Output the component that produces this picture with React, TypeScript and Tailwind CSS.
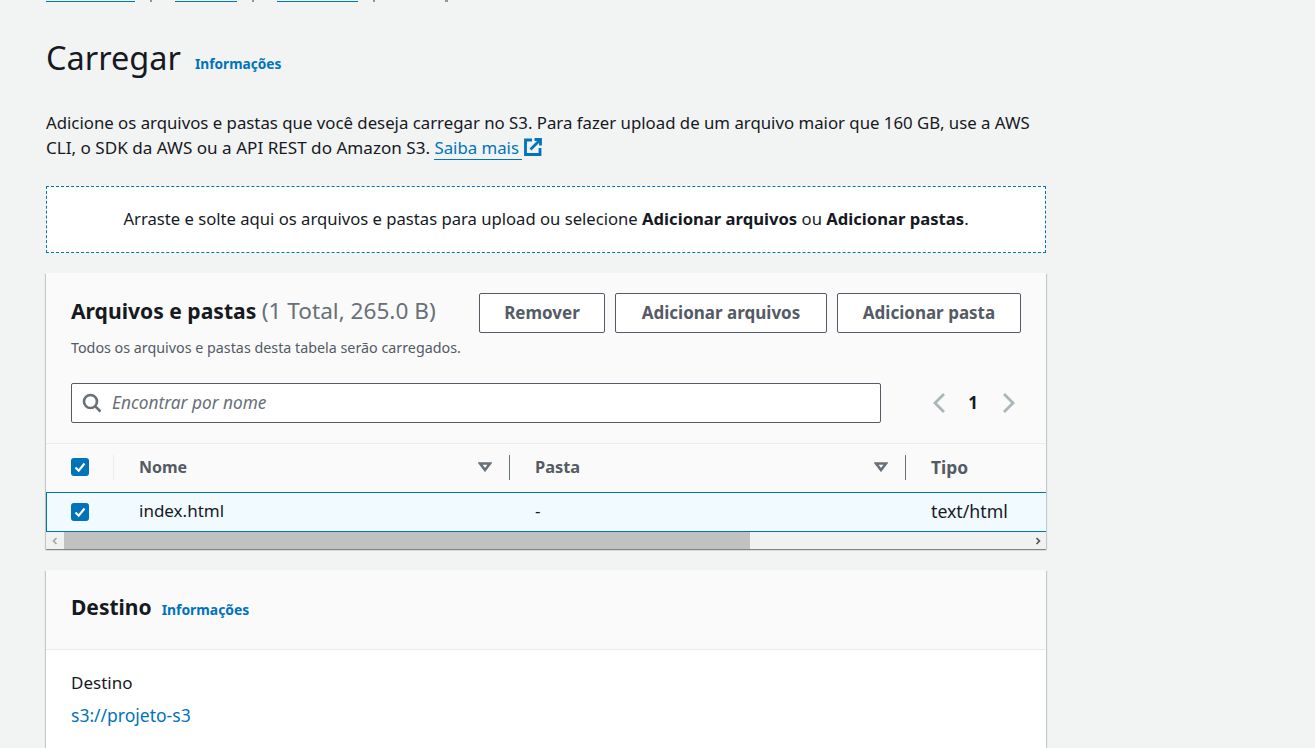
function Check() {
  return (
    <span className="flex h-[18px] w-[18px] items-center justify-center rounded-[3px] bg-[#0073bb]">
      <svg viewBox="0 0 14 14" className="h-[14px] w-[14px]" fill="none" stroke="#fff" strokeWidth="2.2">
        <path d="M2.5 7.5 L5.7 10.7 L11.5 3.5" />
      </svg>
    </span>
  );
}

function Caret() {
  return (
    <svg viewBox="0 0 14 10" className="h-[10px] w-[14px]" fill="none" stroke="#687078" strokeWidth="2.6">
      <path d="M2 1.5 H12 L7 8 Z" />
    </svg>
  );
}

function Btn({ label, w }: { label: string; w: string }) {
  return (
    <button className={`${w} flex h-10 items-center justify-center rounded-[2px] border border-[#545b64] bg-white text-[17px] font-bold text-[#545b64]`}>
      {label}
    </button>
  );
}

export default function App() {
  return (
    <div className="h-[748px] overflow-hidden bg-[#f2f3f3] pl-[46px] font-['Noto_Sans',sans-serif] text-[16.8px] text-[#16191f]">
      {/* breadcrumb is scrolled almost out of view, only its bottom edge shows */}
      <div className="flex h-[2px] w-[1000px] items-start">
        <div className="h-[2px] w-[89px] border-b border-[#0073bb]" />
        <div className="ml-[15px] h-[2px] w-[2px] bg-[#8d949c]" />
        <div className="ml-[23px] h-[2px] w-[62px] border-b border-[#0073bb]" />
        <div className="ml-[15px] h-[2px] w-[2px] bg-[#8d949c]" />
        <div className="ml-[23px] h-[2px] w-[81px] border-b border-[#0073bb]" />
        <div className="ml-[15px] h-[2px] w-[2px] bg-[#8d949c]" />
        <div className="ml-[70px] h-[2px] w-[3px] bg-[#9a9a8c]" />
      </div>

      <div className="flex h-[108px] w-[1000px] items-start pt-[33px]">
        <h1 className="text-[32.5px] leading-[46px] font-normal">Carregar</h1>
        <a className="ml-[14px] mt-[19px] text-[13.7px] leading-5 font-bold text-[#0073bb]">Informações</a>
      </div>

      <p className="w-[1000px] text-[16.8px] leading-[25px]">
        Adicione os arquivos e pastas que você deseja carregar no S3. Para fazer upload de um arquivo maior que 160 GB, use a AWS
        <br />
        <span className="text-[17.1px]">CLI, o SDK da AWS ou a API REST do Amazon S3.</span>{" "}
        <a className="border-b border-[#0073bb] pr-[3px] text-[#0073bb]">Saiba mais</a>
        <svg viewBox="0 0 18 18" className="ml-[2px] inline h-[18px] w-[18px] align-[-2px]" fill="none" stroke="#0073bb" strokeWidth="2.8">
          <path d="M8 2 H1.5 V16.5 H16 V10" />
          <path d="M6.5 11.5 L16 2 M10.5 1.5 H16.5 V7.5" />
        </svg>
      </p>

      <div className="mt-[26px] flex h-[67px] w-[1000px] items-center justify-center border border-dashed border-[#0073bb] bg-white text-[16.65px]">
        Arraste e solte aqui os arquivos e pastas para upload ou selecione&nbsp;<b>Adicionar arquivos</b>&nbsp;ou&nbsp;<b>Adicionar pastas</b>.
      </div>

      <section className="mt-[20px] w-[1000px] bg-white shadow-[0_1px_1px_0_rgba(0,28,36,0.3),1px_1px_1px_0_rgba(0,28,36,0.15),-1px_1px_1px_0_rgba(0,28,36,0.15)]">
        <div className="h-[171px] border-b border-[#eaeded] bg-[#fafafa] px-[25px] pt-[19px]">
          <div className="flex items-start justify-between">
            <div>
              <div className="text-[21.1px] leading-[38px] font-bold">
                Arquivos e pastas <span className="text-[22.6px] font-normal text-[#687078]">(1 Total, 265.0 B)</span>
              </div>
              <div className="mt-[8px] text-[14.3px] leading-5 text-[#545b64]">
                Todos os arquivos e pastas desta tabela serão carregados.
              </div>
            </div>
            <div className="mt-[1px] flex gap-[10px]">
              <Btn label="Remover" w="w-[126px]" />
              <Btn label="Adicionar arquivos" w="w-[212px]" />
              <Btn label="Adicionar pasta" w="w-[184px]" />
            </div>
          </div>
          <div className="mt-[25px] flex items-center">
            <div className="flex h-10 w-[810px] items-center rounded-[2px] border border-[#545b64] bg-white pl-[10px]">
              <svg viewBox="0 0 20 20" className="h-5 w-5" fill="none" stroke="#687078" strokeWidth="2.6">
                <circle cx="8.5" cy="8.5" r="6.5" />
                <path d="M13.3 13.3 L18.5 18.5" />
              </svg>
              <span className="ml-[10px] text-[17.3px] text-[#687078] italic">Encontrar por nome</span>
            </div>
            <div className="ml-[51px] flex items-center">
              <svg viewBox="0 0 14 22" className="h-[22px] w-[14px]" fill="none" stroke="#aab7b8" strokeWidth="2.8">
                <path d="M12 2 L3 11 L12 20" />
              </svg>
              <span className="ml-[22px] w-[10px] text-center text-[17px] font-bold">1</span>
              <svg viewBox="0 0 14 22" className="ml-[24px] h-[22px] w-[14px]" fill="none" stroke="#aab7b8" strokeWidth="2.8">
                <path d="M2 2 L11 11 L2 20" />
              </svg>
            </div>
          </div>
        </div>

        <div className="flex h-[48px] items-center bg-[#fafafa] pb-[2px] font-bold text-[#545b64]">
          <div className="flex w-[68px] items-center pl-[25px]">
            <Check />
            <span className="ml-[24px] h-[25px] w-px bg-[#eaeded]" />
          </div>
          <div className="flex w-[395px] items-center justify-between pl-[25px] pr-[17px] text-[16px]">
            Nome
            <Caret />
          </div>
          <span className="h-[25px] w-px bg-[#687078]" />
          <div className="flex w-[395px] items-center justify-between pl-[25px] pr-[17px] text-[16.4px]">
            Pasta
            <Caret />
          </div>
          <span className="h-[25px] w-px bg-[#687078]" />
          <div className="pl-[25px] text-[17.4px]">Tipo</div>
        </div>

        <div className="flex h-10 items-center border-y border-l border-[#0073bb] bg-[#f1faff] text-[17px]">
          <div className="w-[67px] pl-[24px]">
            <Check />
          </div>
          <div className="w-[396px] pb-[2px] pl-[25px]">index.html</div>
          <div className="w-[396px] pb-[2px] pl-[25px]">-</div>
          <div className="pb-[2px] pl-[25px] text-[17.7px]">text/html</div>
        </div>

        <div className="flex h-[17px] bg-[#f1f1f1]">
          <div className="flex w-[18px] items-center justify-center">
            <svg viewBox="0 0 6 8" className="h-[8px] w-[6px]" fill="none" stroke="#a3a3a3" strokeWidth="1.6">
              <path d="M4.5 1 L1.5 4 L4.5 7" />
            </svg>
          </div>
          <div className="w-[686px] bg-[#c1c1c1]" />
          <div className="flex flex-1 items-center justify-end pr-[5px]">
            <svg viewBox="0 0 6 8" className="h-[8px] w-[6px]" fill="none" stroke="#505050" strokeWidth="1.6">
              <path d="M1.5 1 L4.5 4 L1.5 7" />
            </svg>
          </div>
        </div>
      </section>

      <section className="mt-[21px] w-[1000px] bg-white shadow-[0_1px_1px_0_rgba(0,28,36,0.3),1px_1px_1px_0_rgba(0,28,36,0.15),-1px_1px_1px_0_rgba(0,28,36,0.15)]">
        <div className="flex h-[80px] items-start border-b border-[#eaeded] bg-[#fafafa] px-[25px] pt-[22px]">
          <h2 className="text-[21px] leading-[30px] font-bold">Destino</h2>
          <a className="ml-[10px] mt-[8px] text-[13.9px] leading-5 font-bold text-[#0073bb]">Informações</a>
        </div>
        <div className="h-[120px] px-[25px] pt-[20px]">
          <div className="text-[17px] leading-[25px]">Destino</div>
          <a className="mt-[8px] block text-[17.5px] leading-[25px] text-[#0073bb]">s3://projeto-s3</a>
        </div>
      </section>
    </div>
  );
}
